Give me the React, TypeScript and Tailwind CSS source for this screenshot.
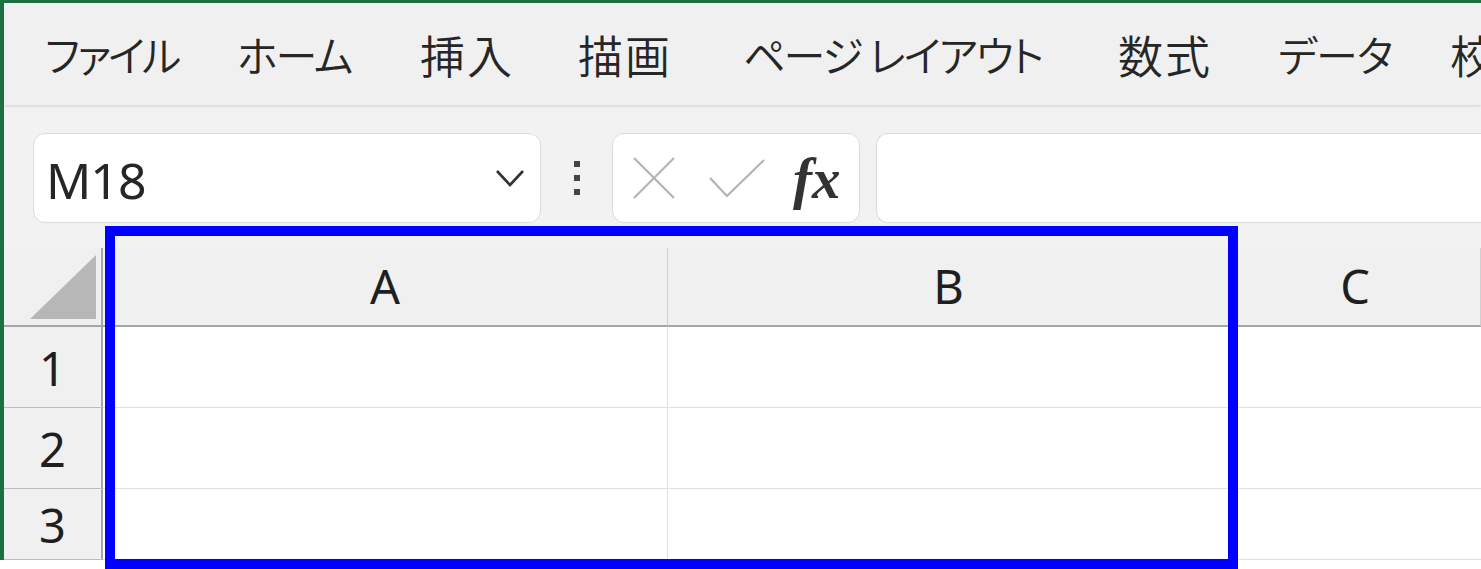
import React from "react";

const tabs = [
  { label: "ファイル", w: "w-[192px]", cls: "text-[42px] tracking-[-3px]" },
  { label: "ホーム", w: "w-[183px]", cls: "text-[42px] tracking-[-2px]" },
  { label: "挿入", w: "w-[158px]", cls: "text-[45px] tracking-[2px]" },
  { label: "描画", w: "w-[165px]", cls: "text-[45px] tracking-[2px]" },
  { label: "ページ レイアウト", w: "w-[375px]", cls: "text-[42px] tracking-[-2px]" },
  { label: "数式", w: "w-[160px]", cls: "text-[45px] tracking-[2px]" },
  { label: "データ", w: "w-[172px]", cls: "text-[42px] tracking-[-1px]" },
  { label: "校閲", w: "w-[120px]", cls: "text-[45px]" },
];

const rows = ["1", "2", "3"];

export default function App() {
  return (
    <div className="relative h-[569px] w-[1481px] overflow-hidden bg-white">
      <div className="flex h-[560px] flex-col border-l-4 border-t-[3px] border-[#1d7044] bg-[#f2f2f2]">
        {/* Ribbon tabs */}
        <div className="flex h-[102px] shrink-0 items-center overflow-hidden bg-[#f0f0f0] pl-[41px] shadow-[0_1px_3px_rgba(0,0,0,0.14)] font-['Noto_Sans_CJK_JP',sans-serif] font-[350] text-[#262626] [font-feature-settings:'palt']">
          {tabs.map((t) => (
            <span key={t.label} className={`${t.w} ${t.cls} shrink-0 whitespace-nowrap leading-none`}>
              {t.label}
            </span>
          ))}
        </div>

        {/* Formula bar */}
        <div className="mt-[28px] flex h-[90px] shrink-0 items-center pl-[29px]">
          <div className="flex h-full w-[508px] items-center justify-between rounded-[12px] border border-[#dcdcdc] bg-white pl-[12px] pr-[16px]">
            <span className="pt-[4px] font-['Noto_Sans',sans-serif] text-[50px] leading-none tracking-[-1px] text-[#262626]">M18</span>
            <svg width="28" height="18" viewBox="0 0 28 18" fill="none">
              <polyline points="1,2 14,16 27,2" stroke="#333" strokeWidth="2.6" />
            </svg>
          </div>
          <div className="flex w-[71px] flex-col items-center gap-[8px]">
            <span className="h-[6px] w-[6px] bg-[#444]" />
            <span className="h-[6px] w-[6px] bg-[#444]" />
            <span className="h-[6px] w-[6px] bg-[#444]" />
          </div>
          <div className="flex h-full w-[248px] items-center rounded-[12px] border border-[#dcdcdc] bg-white pl-[20px]">
            <svg width="42" height="42" viewBox="0 0 42 42" fill="none">
              <path d="M1 1 L41 41 M41 1 L1 41" stroke="#b4b4b4" strokeWidth="2.2" />
            </svg>
            <svg width="56" height="38" viewBox="0 0 56 38" fill="none" className="ml-[34px]">
              <polyline points="1,19 18,37 55,1" stroke="#b4b4b4" strokeWidth="2.2" />
            </svg>
            <span className="ml-[28px] font-['Liberation_Serif',serif] text-[57px] font-bold italic leading-none text-[#333]">fx</span>
          </div>
          <div className="ml-[16px] h-full flex-1 rounded-l-[12px] border border-r-0 border-[#dcdcdc] bg-white" />
        </div>

        {/* Grid */}
        <div className="mt-[25px] grid flex-1 grid-cols-[99px_565px_562px_1fr] grid-rows-[79px_81px_81px_1fr] font-['Noto_Sans',sans-serif] text-[47px] leading-none text-[#1f1f1f]">
          <div className="relative border-b-2 border-r-2 border-[#a6a6a6] bg-[#f0f0f0]">
            <svg className="absolute bottom-[6px] right-[5px]" width="66" height="64" viewBox="0 0 66 64">
              <polygon points="0,64 66,0 66,64" fill="#b7b7b7" />
            </svg>
          </div>
          {["A", "B", "C"].map((c) => (
            <div key={c} className="flex items-center justify-center border-b-2 border-r border-b-[#a6a6a6] border-r-[#cfcfcf] bg-[#f0f0f0]">
              {c}
            </div>
          ))}
          {rows.map((r) => (
            <React.Fragment key={r}>
              <div className="flex items-center justify-center border-b border-r-2 border-b-[#bdbdbd] border-r-[#a6a6a6] bg-[#f0f0f0] pt-[2px]">
                {r}
              </div>
              <div className="border-b border-r border-[#e1e1e1] bg-white" />
              <div className="border-b border-r border-[#e1e1e1] bg-white" />
              <div className="border-b border-[#e1e1e1] bg-white" />
            </React.Fragment>
          ))}
        </div>
      </div>

      {/* selection highlight */}
      <div className="absolute left-[105px] top-[226px] h-[343px] w-[1133px] border-[10px] border-[#0000ff]" />
    </div>
  );
}
